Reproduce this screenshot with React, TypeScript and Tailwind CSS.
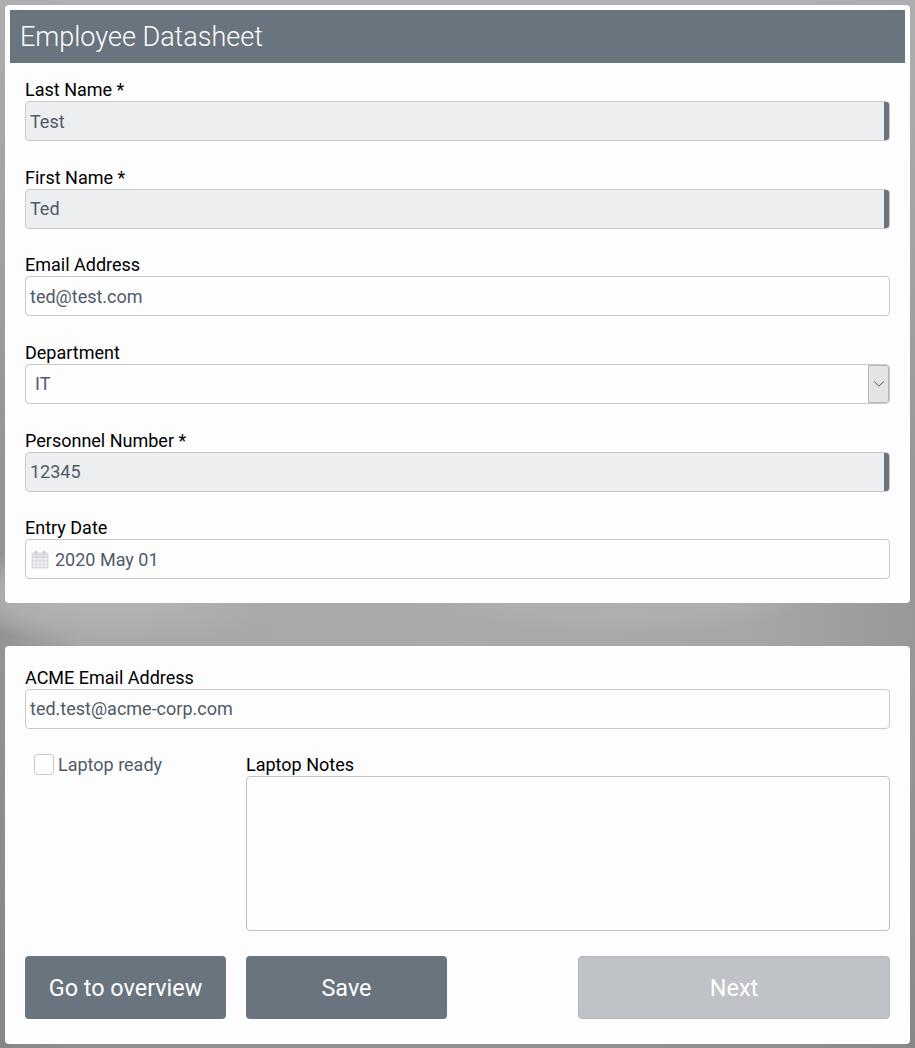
import { ChevronDown } from "lucide-react";

interface FieldProps {
  label: string;
  value: string;
}

const labelClass = "h-[21px] text-[18px] leading-[19px] text-black";

/** Read-only field with the dark marker on its right edge. */
function RequiredField({ label, value }: FieldProps) {
  return (
    <div className="mb-[8px]">
      <div className={labelClass}>{label} *</div>
      <div className="relative flex h-[40px] items-center overflow-hidden rounded-[4px] border border-[#c8c9cb] bg-[#edeef0] pl-[4px] text-[18px] text-[#505a68]">
        {value}
        <div className="absolute top-[-1px] right-[-1px] bottom-[-1px] w-[6px] bg-[#6a747e]" />
      </div>
    </div>
  );
}

function TextField({ label, value }: FieldProps) {
  return (
    <div className="mb-[8px]">
      <div className={labelClass}>{label}</div>
      <div className="flex h-[40px] items-center rounded-[4px] border border-[#c8c9cb] bg-[#fdfdfd] pl-[4px] text-[18px] text-[#505a68]">
        {value}
      </div>
    </div>
  );
}

function CalendarIcon() {
  return (
    <svg width="18" height="19" viewBox="0 0 18 19" className="mr-[6px] ml-[1px] shrink-0">
      <rect x="0.5" y="2.5" width="17" height="16" rx="1.5" fill="#dcdde0" />
      <rect x="3.5" y="0.5" width="3" height="5" rx="1.4" fill="#d2d3d6" />
      <rect x="11.5" y="0.5" width="3" height="5" rx="1.4" fill="#d2d3d6" />
      <path
        d="M1.5 7.5h15v10h-15zM5.2 7.5v10M9 7.5v10M12.8 7.5v10M1.5 10.8h15M1.5 14.1h15"
        fill="#f3f3f4"
        stroke="#d6d7da"
        strokeWidth="1"
      />
    </svg>
  );
}

export default function App() {
  return (
    <div className="flex h-[1048px] w-[915px] flex-col bg-[#a8a9aa] bg-[linear-gradient(180deg,rgba(176,177,179,0.9)_0%,rgba(168,169,170,0)_45%,rgba(168,169,170,0)_62%,rgba(120,120,120,0.5)_100%),radial-gradient(ellipse_170px_52px_at_115px_595px,#b3b4b7_0%,#b0b1b3_35%,#acadaf_65%,transparent_100%),radial-gradient(ellipse_190px_40px_at_620px_595px,#afb0b1_0%,#adaeaf_60%,transparent_100%),linear-gradient(90deg,#929395_0%,#a5a7a8_9%,#a9aaab_50%,#a6a7a8_82%,#97989a_100%)] px-[5px] pt-[5px] font-['Roboto',sans-serif]">
      {/* Datasheet card */}
      <div className="h-[598px] rounded-[4px] bg-[#fdfdfd] p-[5px]">
        <div className="h-[53px] bg-[#6a747e] pt-[1px] pl-[10px] text-[27px] leading-[52px] font-light text-white">
          Employee Datasheet
        </div>
        <div className="px-[15px] pt-[17px]">
          <div className="flex flex-col gap-[18.67px]">
            <RequiredField label="Last Name" value="Test" />
            <RequiredField label="First Name" value="Ted" />
            <TextField label="Email Address" value="ted@test.com" />
            <div className="mb-[8px]">
              <div className={labelClass}>Department</div>
              <div className="flex h-[40px] items-center overflow-hidden rounded-[4px] border border-[#c8c9cb] bg-[#fdfdfd] pl-[9px] text-[18px] text-[#505a68]">
                <span className="flex-1">IT</span>
                <div className="flex h-full w-[21px] items-center justify-center rounded-r-[3px] border border-[#b4b5b7] bg-[#e4e4e4]">
                  <ChevronDown size={18} strokeWidth={1.1} className="text-[#333333]" />
                </div>
              </div>
            </div>
            <RequiredField label="Personnel Number" value="12345" />
            <div className="mb-[8px]">
              <div className={labelClass}>Entry Date</div>
              <div className="flex h-[40px] items-center rounded-[4px] border border-[#c8c9cb] bg-[#fdfdfd] pl-[4px] text-[18px] text-[#505a68]">
                <CalendarIcon />
                2020 May 01
              </div>
            </div>
          </div>
        </div>
      </div>

      {/* IT card */}
      <div className="mt-[43px] h-[398px] rounded-[4px] bg-[#fdfdfd] px-[20px] pt-[22px]">
        <div className="mb-[8px]">
          <div className={labelClass}>ACME Email Address</div>
          <div className="flex h-[40px] items-center rounded-[4px] border border-[#c8c9cb] bg-[#fdfdfd] pb-[2px] pl-[4px] text-[18px] text-[#505a68]">
            ted.test@acme-corp.com
          </div>
        </div>
        <div className="mt-[26px] flex">
          <div className="-mt-[1px] flex w-[221px] items-start pl-[9px]">
            <div className="h-[21px] w-[20px] rounded-[4px] border border-[#c8c9cb] bg-[#fdfdfd]" />
            <span className="ml-[4px] text-[18px] leading-[21px] text-[#505a68]">Laptop ready</span>
          </div>
          <div className="flex-1">
            <div className={labelClass}>Laptop Notes</div>
            <div className="h-[155px] rounded-[4px] border border-[#c0c1c3] bg-[#fdfdfd]" />
          </div>
        </div>
        <div className="mt-[25px] flex">
          <button className="h-[63px] w-[201px] rounded-[4px] bg-[#6a747e] pt-[3px] text-[23.4px] text-white">
            Go to overview
          </button>
          <button className="ml-[20px] h-[63px] w-[201px] rounded-[4px] bg-[#6a747e] pt-[3px] text-[23.4px] text-white">
            Save
          </button>
          <button className="ml-auto h-[63px] w-[312px] rounded-[4px] border border-[#b3b6ba] bg-[#bfc2c6] pt-[3px] text-[23.4px] text-white">
            Next
          </button>
        </div>
      </div>
    </div>
  );
}
